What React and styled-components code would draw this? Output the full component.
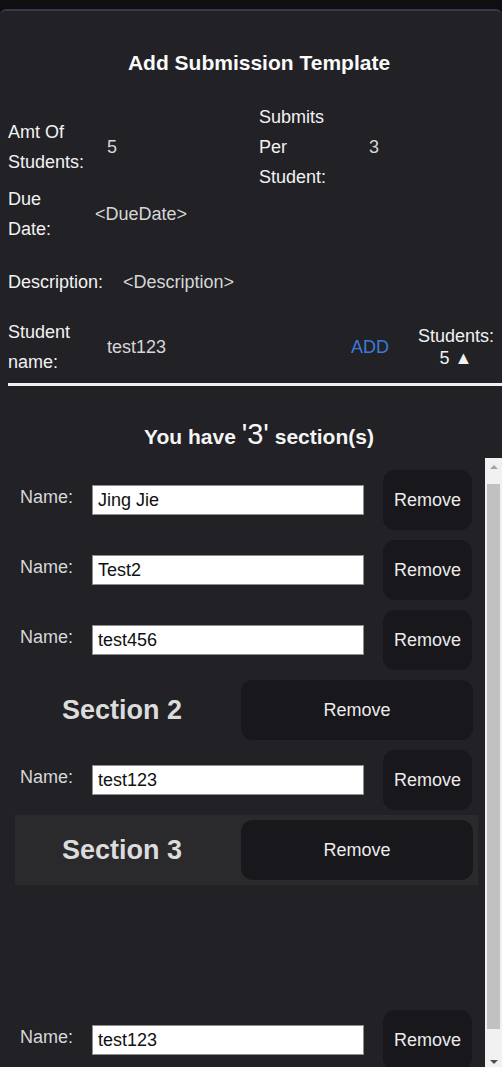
import React from 'react';
import styled, { createGlobalStyle } from 'styled-components';

const GlobalStyle = createGlobalStyle`
  html, body {
    margin: 0;
    padding: 0;
    overflow: hidden;
    background: #0f0f10;
    font-family: "Liberation Sans", Arial, sans-serif;
  }
`;

const Page = styled.div`
  padding-top: 9px;
  width: 502px;
  height: 1067px;
  box-sizing: border-box;
  overflow: hidden;
`;

const Panel = styled.div`
  background: #212126;
  border-top: 2px solid #393750;
  border-radius: 6px 6px 0 0;
  height: 1058px;
  box-sizing: border-box;
  padding-left: 8px;
  color: #f0f0f0;
  font-size: 18px;
`;

const Inner = styled.div`
  width: 502px;
`;

const Title = styled.h2`
  margin: 39px 0 0;
  font-size: 21px;
  line-height: 25px;
  font-weight: bold;
  text-align: center;
  color: #fafafa;
`;

const InfoRow = styled.div`
  display: grid;
  grid-template-columns: ${p => p.$cols};
  align-items: center;
  height: ${p => p.$h}px;
  margin-top: ${p => p.$mt || 0}px;
`;

const Label = styled.div`
  width: ${p => p.$w}px;
  line-height: 30px;
  color: #f2f2f2;
`;

const Value = styled.div`
  color: #d6d6d6;
  line-height: 30px;
`;

const AddLink = styled.span`
  color: #3b7bd8;
  margin-right: 29px;
  line-height: 30px;
`;

const StudentCount = styled.div`
  width: 76px;
  margin-right: 16px;
  text-align: center;
  line-height: 22px;
  color: #f2f2f2;
`;

const Divider = styled.hr`
  margin: 6px 0 0;
  border: none;
  height: 3px;
  background: #f0f0f0;
`;

const SectionCount = styled.h3`
  margin: 32px 0 5px;
  line-height: 32px;
  font-size: 21px;
  font-weight: bold;
  text-align: center;
  color: #f4f4f4;
`;

const BigNum = styled.span`
  font-size: 29px;
  font-weight: normal;
  color: #f8f8f8;
`;

/* list + its (drawn) scrollbar */
const ScrollFrame = styled.div`
  display: flex;
  width: 494px;
  height: 610px;
`;

const ScrollContent = styled.div`
  flex: 1;
  overflow: hidden;
  padding: 7px 7px 0;
`;

const ScrollBar = styled.div`
  width: 17px;
  display: flex;
  flex-direction: column;
  background: #f1f1f1;
`;

const ArrowBtn = styled.div`
  height: 17px;
  display: flex;
  align-items: center;
  justify-content: center;
  flex-shrink: 0;

  &::after {
    content: '';
    border-left: 4px solid transparent;
    border-right: 4px solid transparent;
    ${p =>
      p.$down
        ? 'border-top: 4px solid #505050; margin-top: 4px;'
        : 'border-bottom: 4px solid #a3a3a3;'}
  }
`;

const Thumb = styled.div`
  flex: 1;
  margin: 9px 2px 22px;
  background: #c1c1c1;
`;

const NameRow = styled.div`
  display: flex;
  align-items: center;
  height: 70px;
  padding: 0 5px;
`;

const NameLabel = styled.span`
  width: 72px;
  color: #d8d8d8;
  margin-bottom: 6px;
`;

const NameInput = styled.input`
  width: 272px;
  height: 30px;
  box-sizing: border-box;
  border: 1px solid #8c8c8c;
  background: #fff;
  padding: 0 5px;
  font-family: "Liberation Sans", Arial, sans-serif;
  font-size: 18px;
  color: #111;
  outline: none;
`;

const RemoveButton = styled.button`
  margin-left: ${p => (p.$wide ? 0 : 19)}px;
  width: ${p => (p.$wide ? '100%' : '89px')};
  height: 60px;
  border: none;
  border-radius: 12px;
  background: #18171b;
  color: #ececec;
  font-family: "Liberation Sans", Arial, sans-serif;
  font-size: 18px;
  cursor: pointer;
`;

const SectionHeader = styled.div`
  display: grid;
  grid-template-columns: 226px 1fr;
  align-items: center;
  height: 70px;
  padding-right: 5px;
  background: ${p => (p.$active ? '#2a2a2d' : 'transparent')};
`;

const SectionTitle = styled.div`
  font-size: 27px;
  font-weight: bold;
  color: #dcdcdc;
  text-align: center;
  padding-right: 12px;
`;

const Spacer = styled.div`
  height: 120px;
`;

const Row = ({ name }) => (
  <NameRow>
    <NameLabel>Name:</NameLabel>
    <NameInput defaultValue={name} />
    <RemoveButton>Remove</RemoveButton>
  </NameRow>
);

const Header = ({ n, active }) => (
  <SectionHeader $active={active}>
    <SectionTitle>Section {n}</SectionTitle>
    <RemoveButton $wide>Remove</RemoveButton>
  </SectionHeader>
);

export default function App() {
  return (
    <Page>
      <GlobalStyle />
      <Panel>
        <Inner>
          <Title>Add Submission Template</Title>

          <InfoRow $cols="99px 152px 110px 1fr" $h={90} $mt={27}>
            <Label $w={80}>Amt Of Students:</Label>
            <Value>5</Value>
            <Label $w={75}>Submits Per Student:</Label>
            <Value>3</Value>
          </InfoRow>

          <InfoRow $cols="87px 1fr" $h={60} $mt={-8}>
            <Label $w={60}>Due Date:</Label>
            <Value>&lt;DueDate&gt;</Value>
          </InfoRow>

          <InfoRow $cols="115px 1fr" $h={30} $mt={23}>
            <Label $w={110}>Description:</Label>
            <Value>&lt;Description&gt;</Value>
          </InfoRow>

          <InfoRow $cols="99px 1fr auto auto" $h={60} $mt={20}>
            <Label $w={80}>Student name:</Label>
            <Value>test123</Value>
            <AddLink>ADD</AddLink>
            <StudentCount>
              Students:
              <br />5 ▲
            </StudentCount>
          </InfoRow>

          <Divider />

          <SectionCount>
            You have <BigNum>'3'</BigNum> section(s)
          </SectionCount>
        </Inner>

        <ScrollFrame>
          <ScrollContent>
            <Row name="Jing Jie" />
            <Row name="Test2" />
            <Row name="test456" />
            <Header n={2} />
            <Row name="test123" />
            <Header n={3} active />
            <Spacer />
            <Row name="test123" />
          </ScrollContent>
          <ScrollBar>
            <ArrowBtn />
            <Thumb />
            <ArrowBtn $down />
          </ScrollBar>
        </ScrollFrame>
      </Panel>
    </Page>
  );
}
